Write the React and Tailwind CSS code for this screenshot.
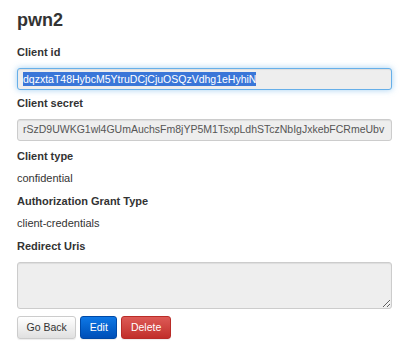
const FIELDS = [
  { label: 'Client type', value: 'confidential' },
  { label: 'Authorization Grant Type', value: 'client-credentials' },
]

export default function App() {
  return (
    <div className="min-h-[347px] bg-white pl-[17px] pr-[10px] pt-[10px] text-[#333] font-['Liberation_Sans',Arial,sans-serif]">
      <h3 className="text-[18px] leading-[20px] font-bold mb-[14px]">pwn2</h3>

      {/* Client id (focused, selected) */}
      <label className="block text-[11px] leading-[16px] font-bold mb-[8px]">Client id</label>
      <div className="h-[22px] w-full rounded-[3px] border border-[#66afe9] bg-[#eee] px-[5px] flex items-center text-[10.5px] leading-[14px] shadow-[inset_0_1px_1px_rgba(0,0,0,0.075),0_0_6px_rgba(102,175,233,0.6)] mb-[5px] overflow-hidden whitespace-nowrap">
        <span className="bg-[#3a76d8] text-white">dqzxtaT48HybcM5YtruDCjCjuOSQzVdhg1eHyhiN</span>
      </div>

      {/* Client secret */}
      <label className="block text-[11px] leading-[16px] font-bold mb-[8px]">Client secret</label>
      <div className="h-[22px] w-full rounded-[3px] border border-[#ccc] bg-[#eee] pl-[5px] flex items-center text-[10.5px] text-[#555] shadow-[inset_0_1px_1px_rgba(0,0,0,0.075)] mb-[7px] overflow-hidden whitespace-nowrap">
        rSzD9UWKG1wl4GUmAuchsFm8jYP5M1TsxpLdhSTczNbIgJxkebFCRmeUbv
      </div>

      {FIELDS.map((f) => (
        <div key={f.label}>
          <label className="block text-[11px] leading-[16px] font-bold mb-[6px]">{f.label}</label>
          <p className="text-[11px] leading-[16px] mb-[7px]">{f.value}</p>
        </div>
      ))}

      {/* Redirect uris */}
      <label className="block text-[11px] leading-[16px] font-bold mb-[8px]">Redirect Uris</label>
      <textarea
        readOnly
        className="block h-[47px] w-full rounded-[3px] border border-[#ccc] bg-[#eee] shadow-[inset_0_1px_1px_rgba(0,0,0,0.075)] mb-[7px] resize-y outline-none"
      />

      <div className="flex gap-[4px] text-[10.5px]">
        <button className="h-[23px] px-[8.5px] rounded-[3px] border border-[#ccc] bg-gradient-to-b from-white to-[#e0e0e0] text-[#333] shadow-[0_1px_1px_rgba(0,0,0,0.075)]">
          Go Back
        </button>
        <button className="h-[23px] px-[8.5px] rounded-[3px] border border-[#0049a6] bg-gradient-to-b from-[#0f78e6] to-[#004fb8] text-white shadow-[0_1px_1px_rgba(0,0,0,0.075)]">
          Edit
        </button>
        <button className="h-[23px] px-[8.5px] rounded-[3px] border border-[#b92c28] bg-gradient-to-b from-[#dd5a56] to-[#c12e2a] text-white shadow-[0_1px_1px_rgba(0,0,0,0.075)]">
          Delete
        </button>
      </div>
    </div>
  )
}
